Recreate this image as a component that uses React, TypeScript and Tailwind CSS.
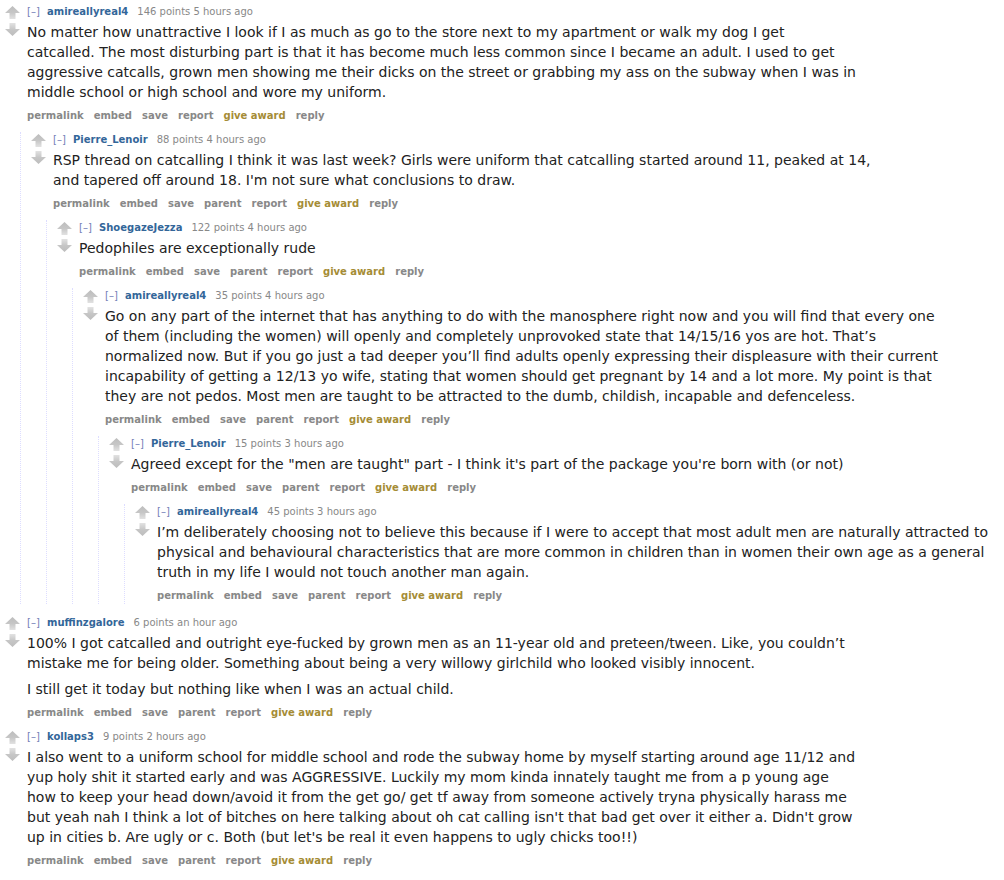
import React from "react";

type C = {
  author: string;
  points: string;
  time: string;
  body: string[][];
  parent?: boolean;
  kids?: C[];
};

const font = { fontFamily: '"DejaVu Sans", Verdana, sans-serif' };

function Arrow({ down }: { down?: boolean }) {
  const id = down ? "gd" : "gu";
  return (
    <svg width="15" height="14" viewBox="0 0 15 14" className="block">
      <defs>
        <linearGradient id={id} x1="0" y1="0" x2="0" y2="1">
          <stop offset="0" stopColor={down ? "#e2e2e2" : "#bdbdbd"} />
          <stop offset="0.5" stopColor="#c6c6c6" />
          <stop offset="1" stopColor={down ? "#bdbdbd" : "#e2e2e2"} />
        </linearGradient>
      </defs>
      {down ? (
        <path d="M7.5 14 L15 7 L10.5 7 L10.5 1 L4.5 1 L4.5 7 L0 7 Z" fill={`url(#${id})`} />
      ) : (
        <path d="M7.5 0 L15 7 L10.5 7 L10.5 13 L4.5 13 L4.5 7 L0 7 Z" fill={`url(#${id})`} />
      )}
    </svg>
  );
}

function Buttons({ parent }: { parent?: boolean }) {
  const items = ["permalink", "embed", "save", ...(parent ? ["parent"] : []), "report"];
  return (
    <div className="mt-[6px] flex gap-x-[10px] text-[10px] font-bold leading-[16px] text-[#888]">
      {items.map((i) => (
        <span key={i}>{i}</span>
      ))}
      <span className="text-[#a58c36]">give award</span>
      <span>reply</span>
    </div>
  );
}

function Comment({ c }: { c: C }) {
  return (
    <div>
      <div className="flex">
        <div className="mr-[7px] mt-[2px] flex w-[15px] shrink-0 flex-col gap-[2px]">
          <Arrow />
          <Arrow down />
        </div>
        <div className="min-w-0">
          <div className="text-[10px] leading-[16px] text-[#888]">
            <span className="text-[#7480b8]">[–]</span>{" "}
            <span className="ml-[4px] font-bold text-[#369]">{c.author}</span>
            <span className="ml-[9px]">{c.points}</span> {c.time}
          </div>
          <div className="mt-[2px] flex flex-col gap-[6px] text-[14px] leading-[20px] text-[#222]">
            {c.body.map((p, i) => (
              <p key={i}>
                {p.map((l, j) => (
                  <span key={j} className="block whitespace-nowrap">
                    {l}
                  </span>
                ))}
              </p>
            ))}
          </div>
          <Buttons parent={c.parent} />
        </div>
      </div>
      {c.kids && (
        <div className="ml-[15px] border-l border-dotted border-[#ddf] pl-[10px]">
          {c.kids.map((k, i) => (
            <div key={i} className="mt-[8px]">
              <Comment c={k} />
            </div>
          ))}
        </div>
      )}
    </div>
  );
}

const thread: C = {
  author: "amireallyreal4",
  points: "146 points",
  time: "5 hours ago",
  body: [
    [
      "No matter how unattractive I look if I as much as go to the store next to my apartment or walk my dog I get",
      "catcalled. The most disturbing part is that it has become much less common since I became an adult. I used to get",
      "aggressive catcalls, grown men showing me their dicks on the street or grabbing my ass on the subway when I was in",
      "middle school or high school and wore my uniform.",
    ],
  ],
  kids: [
    {
      author: "Pierre_Lenoir",
      points: "88 points",
      time: "4 hours ago",
      parent: true,
      body: [
        [
          "RSP thread on catcalling I think it was last week? Girls were uniform that catcalling started around 11, peaked at 14,",
          "and tapered off around 18. I'm not sure what conclusions to draw.",
        ],
      ],
      kids: [
        {
          author: "ShoegazeJezza",
          points: "122 points",
          time: "4 hours ago",
          parent: true,
          body: [["Pedophiles are exceptionally rude"]],
          kids: [
            {
              author: "amireallyreal4",
              points: "35 points",
              time: "4 hours ago",
              parent: true,
              body: [
                [
                  "Go on any part of the internet that has anything to do with the manosphere right now and you will find that every one",
                  "of them (including the women) will openly and completely unprovoked state that 14/15/16 yos are hot. That’s",
                  "normalized now. But if you go just a tad deeper you’ll find adults openly expressing their displeasure with their current",
                  "incapability of getting a 12/13 yo wife, stating that women should get pregnant by 14 and a lot more. My point is that",
                  "they are not pedos. Most men are taught to be attracted to the dumb, childish, incapable and defenceless.",
                ],
              ],
              kids: [
                {
                  author: "Pierre_Lenoir",
                  points: "15 points",
                  time: "3 hours ago",
                  parent: true,
                  body: [
                    [
                      'Agreed except for the "men are taught" part - I think it\'s part of the package you\'re born with (or not)',
                    ],
                  ],
                  kids: [
                    {
                      author: "amireallyreal4",
                      points: "45 points",
                      time: "3 hours ago",
                      parent: true,
                      body: [
                        [
                          "I’m deliberately choosing not to believe this because if I were to accept that most adult men are naturally attracted to",
                          "physical and behavioural characteristics that are more common in children than in women their own age as a general",
                          "truth in my life I would not touch another man again.",
                        ],
                      ],
                    },
                  ],
                },
              ],
            },
          ],
        },
      ],
    },
  ],
};

const others: C[] = [
  {
    author: "muffinzgalore",
    points: "6 points",
    time: "an hour ago",
    parent: true,
    body: [
      [
        "100% I got catcalled and outright eye-fucked by grown men as an 11-year old and preteen/tween. Like, you couldn’t",
        "mistake me for being older. Something about being a very willowy girlchild who looked visibly innocent.",
      ],
      ["I still get it today but nothing like when I was an actual child."],
    ],
  },
  {
    author: "kollaps3",
    points: "9 points",
    time: "2 hours ago",
    parent: true,
    body: [
      [
        "I also went to a uniform school for middle school and rode the subway home by myself starting around age 11/12 and",
        "yup holy shit it started early and was AGGRESSIVE. Luckily my mom kinda innately taught me from a p young age",
        "how to keep your head down/avoid it from the get go/ get tf away from someone actively tryna physically harass me",
        "but yeah nah I think a lot of bitches on here talking about oh cat calling isn't that bad get over it either a. Didn't grow",
        "up in cities b. Are ugly or c. Both (but let's be real it even happens to ugly chicks too!!)",
      ],
    ],
  },
];

export default function App() {
  return (
    <div className="min-h-[880px] overflow-hidden bg-white pl-[5px] pt-[4px]" style={font}>
      <Comment c={thread} />
      <div className="mt-[11px]">
        <Comment c={others[0]} />
      </div>
      <div className="mt-[8px]">
        <Comment c={others[1]} />
      </div>
    </div>
  );
}
